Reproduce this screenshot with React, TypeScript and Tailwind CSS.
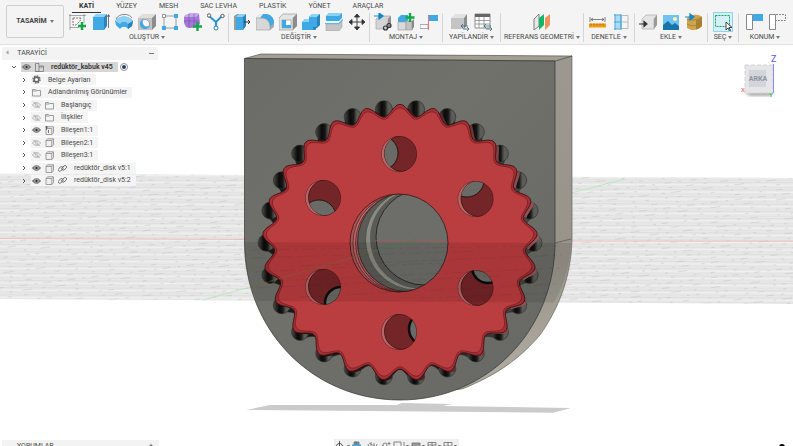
import type { ReactNode } from "react";

const GREEN = "#12a84a";
const BLUE = "#3fa9e6";

const ICONS: Record<string, ReactNode> = {
  sketch: (
    <>
      <path d="M1 1v16M15 1v9M0 2.500h17M1 14.500h9" stroke="#888" fill="none" strokeWidth=".7" />
      <path d="M4 5h8M4 5v7h3l4-4 1-3" stroke="#555" fill="none" strokeDasharray="2 1" strokeWidth=".8" />
      <path d="M13 9v8M9 13h8" stroke={GREEN} strokeWidth="2.400" />
    </>
  ),
  extrude: (
    <>
      <path d="M1 4l3-3h11l-3 3z" fill="#8fd0f5" />
      <path d="M1 4h11v13H1z" fill={BLUE} />
      <path d="M12 4l3-3v12l-3 4z" fill="#2a83bb" />
      <path d="M16.500 15V2M15 4l1.500-2.500L18 4" stroke="#555" fill="none" strokeWidth=".8" />
    </>
  ),
  revolve: (
    <>
      <path d="M1 6C4 0 14 0 17 5" stroke="#888" fill="none" />
      <path d="M0 8c4-6 14-6 18 0l-1 5-4 3c-2-3-6-3-8 0l-4-4z" fill={BLUE} />
      <path d="M0 8c4-6 14-6 18 0l-5 3c-2-3-6-3-8 0z" fill="#8fd0f5" />
      <path d="M13 11l5-3-1 5-4 3z" fill="#2a83bb" />
    </>
  ),
  hole: (
    <>
      <path d="M0 5l4-4h14l-4 4z" fill="#dedede" />
      <path d="M14 5l4-4v12l-4 4z" fill="#8c8c8c" />
      <path d="M0 5h14v12H0z" fill="#c2c2c2" />
      <circle cx="7" cy="11" r="4.500" fill="#f7f7f7" stroke="#888" strokeWidth=".7" />
      <path d="M4 8a4 4 0 0 0 6 6 5 5 0 0 1-6-6z" fill={BLUE} stroke={BLUE} strokeWidth="1.500" />
    </>
  ),
  pattern: (
    <>
      <path d="M3 3h12M3 3v12M15 5v8M5 15h8" stroke="#888" strokeWidth=".8" />
      <path d="M1.500 1.500h3v3h-3z" fill="#fff" stroke="#777" strokeWidth=".8" />
      <path d="M13 1h4v4h-4zM1 13h4v4H1zM13 13h4v4h-4z" fill={BLUE} />
    </>
  ),
  form: (
    <>
      <path d="M0 4c3-4 10-5 15-3l1 10c-4 4-10 5-14 3-2-3-3-7-2-10z" fill="#a578d8" />
      <path d="M0 4c3-4 10-5 15-3l-3 3c-4 0-8 0-12 0z" fill="#c8a8ee" />
      <path d="M5 1v14M10 1v13M0 8h15" stroke="#7d53b3" strokeWidth=".7" />
      <path d="M13.500 9v9M9 13.500h9" stroke={GREEN} strokeWidth="2.400" />
    </>
  ),
  pipe: (
    <>
      <path d="M2 3l7 6 6-6M9 9v6" stroke={BLUE} strokeWidth="2.200" fill="none" />
      <path d="M2 3l7 6 6-6M9 9v6" stroke="#2a5d80" strokeWidth=".6" fill="none" />
      <circle cx="2" cy="2.500" r="1.700" fill="#fff" stroke="#555" />
      <circle cx="15.500" cy="3" r="1.700" fill="#fff" stroke="#555" />
      <circle cx="9" cy="15" r="2" fill="#fff" stroke="#2a83bb" />
    </>
  ),
  press: (
    <>
      <path d="M1 3l3-2h7l-3 2v14H1z" fill="#9b9b9b" />
      <path d="M3 4l3-3h7l-3 3v13H3z" fill={BLUE} />
      <path d="M3 4l3-3h7l-3 3z" fill="#8fd0f5" />
      <path d="M10 4l3-3v12l-3 4z" fill="#2a83bb" />
      <path d="M11 9h6M15 7l2 2-2 2" stroke="#333" fill="none" />
    </>
  ),
  fillet: (
    <>
      <path d="M0 5l4-4h5c6 0 9 4 9 9v4l-4 3H0z" fill="#a9a9a9" />
      <path d="M6 1h3c6 0 9 4 9 9l-4 4c0-5-3-9-8-9H3z" fill={BLUE} />
      <path d="M0 5l4-4h3L4 5z" fill="#ececec" />
      <path d="M0 5h5c6 0 9 4 9 9v3H0z" fill="#d7d7d7" stroke="#999" strokeWidth=".6" />
    </>
  ),
  shell: (
    <>
      <path d="M0 5l4-4h14l-4 4v12H0z" fill="#e4e4e4" stroke="#999" strokeWidth=".7" />
      <path d="M14 5l4-4v12l-4 4z" fill="#8c8c8c" />
      <path d="M3 7h9v8H3z" fill="#fff" stroke="#999" strokeWidth=".7" />
      <path d="M3 7h4v5h5v3H3z" fill={BLUE} />
    </>
  ),
  combine: (
    <>
      <path d="M0 9l3-3h4V4l3-3h8v11l-4 3v2H0z" fill={BLUE} />
      <path d="M7 4l3-3h8l-3 3zM0 9l3-3h4v3z" fill="#8fd0f5" />
      <path d="M15 4l3-3v11l-3 3z" fill="#2a83bb" />
      <path d="M11 14h4v1l-4 2z" fill="#2a83bb" />
    </>
  ),
  split: (
    <>
      <path d="M1 11h13l3-3v6l-3 4H1z" fill="#c4c4c4" stroke="#999" strokeWidth=".5" />
      <path d="M1 3l3-3h13v5l-3 3H1z" fill={BLUE} />
      <path d="M1 3l3-3h13l-3 3z" fill="#8fd0f5" />
      <path d="M0 10.500h14l4-4" stroke="#56b9ee" strokeWidth="1.200" fill="none" />
    </>
  ),
  move: (
    <path
      d="M9 2v14M2 9h14M6.500 4L9 1l2.500 3zM6.500 14L9 17l2.500-3zM4 6.500L1 9l3 2.500zM14 6.500L17 9l-3 2.500z"
      stroke="#333"
      fill="#333"
      strokeWidth=".9"
    />
  ),
  assemble: (
    <>
      <path d="M2 6l4-3h11l-3 3v10H2z" fill="#d4d4d4" stroke="#999" strokeWidth=".6" />
      <path d="M14 6l3-3v10l-3 3z" fill="#909090" />
      <path d="M0 3h7M5 0l4 3-4 3z" stroke="#1484cf" fill="#1484cf" strokeWidth="1.200" />
      <g fill="none" stroke="#333" strokeWidth="1.200">
        <circle cx="11.500" cy="15" r="2" />
        <circle cx="15" cy="12.500" r="2" />
      </g>
    </>
  ),
  component: (
    <>
      <path d="M1 5l3-3h7v7H1z" fill={BLUE} />
      <path d="M1 9h8v8H1z" fill="#dadada" stroke="#999" strokeWidth=".6" />
      <path d="M9 8h6v9H9z" fill="#c2c2c2" stroke="#999" strokeWidth=".6" />
      <path d="M15 8l2-2v8l-2 3z" fill="#888" />
      <path d="M13 0v9M8.500 4.500h9" stroke={GREEN} strokeWidth="2.400" />
    </>
  ),
  joint: (
    <>
      <path d="M9 2h9v6H9z" fill={BLUE} />
      <path d="M0 11.500h8v4H0z" fill="#f7f7f7" stroke="#999" strokeWidth=".8" />
      <path d="M8.500 2v15" stroke="#e37878" />
    </>
  ),
  configure: (
    <>
      <path d="M0 5l4-4h12l-3 4z" fill="#e2e2e2" />
      <path d="M0 5h13v11H0z" fill="#c4c4c4" />
      <path d="M13 5l3-4v11l-3 4z" fill="#8c8c8c" />
      <path d="M10 13h7M12 16h6M12 11l-2 2 2 2M16 14l2 2-2 2" stroke="#33647f" fill="none" strokeWidth=".8" />
    </>
  ),
  table: (
    <>
      <path d="M1 1h15v14H1z" fill="#fff" stroke="#777" strokeWidth=".8" />
      <path d="M1 1h15v3H1z" fill="#666" />
      <path d="M1 7.500h15M1 11h15M5 4v11M10 4v11" stroke="#888" strokeWidth=".8" />
      <path d="M10 13h7M12 16h6M12 11l-2 2 2 2M16 14l2 2-2 2" stroke="#33647f" fill="none" strokeWidth=".8" />
    </>
  ),
  planes: (
    <>
      <path d="M1 6l5-5v12l-5 4z" fill="#e8e8e8" stroke="#666" strokeWidth=".8" />
      <path d="M6 5l5-4v11l-5 5z" fill="#12b76b" />
      <path d="M12 5l5-4v11l-5 5z" fill="#f0935a" />
    </>
  ),
  measure: (
    <>
      <path d="M1 4v5M16 4v5M2 6.500h13M4 5L2 6.500 4 8M13 5l2 1.500L13 8" stroke="#666" fill="none" strokeWidth=".8" />
      <path d="M0 10.500h17v4H0z" fill="#f39c12" />
      <path d="M2 10.500v2M5 10.500v2M8 10.500v2M11 10.500v2M14 10.500v2" stroke="#8b5a0b" strokeWidth=".7" />
    </>
  ),
  section: (
    <>
      <path d="M3 2h6v14H3z" fill="#a9dcf7" />
      <path d="M2 2h7v14H2M2 9h7M9 1v16M3 1v16" stroke="#4fa6d6" fill="none" />
      <path d="M10 2.500h6v13h-6M10 9h6" stroke="#bbb" fill="none" />
    </>
  ),
  insert: (
    <>
      <path d="M3 6l4-4h11l-3 4v10H3z" fill="#e4e4e4" stroke="#aaa" strokeWidth=".7" />
      <path d="M15 6l3-4v10l-3 4z" fill="#999" />
      <path d="M0 11h7M5 8.500l3 2.500-3 2.500z" stroke="#333" fill="#333" strokeWidth="1.200" />
    </>
  ),
  image: (
    <>
      <path d="M1 2h16v15H1z" fill="#6fc3f0" />
      <circle cx="13" cy="6" r="2" fill="#fff3b0" />
      <path d="M1 12l5-4 4 4 3-2 4 3v4H1z" fill="#1974ab" />
    </>
  ),
  decal: (
    <>
      <path d="M2 6c2-4 11-6 15-2v9c-4 5-11 5-15 2z" fill="#cfa44c" />
      <path d="M17 4v9c-2 2-4 3-6 3.500V7c2 0 4-1 6-3z" fill="#a9802f" />
      <path d="M2 6c4 2 10 1 15-2M2 11c5 3 10 2 15-2" stroke="#9a7630" fill="none" strokeWidth=".7" />
      <path d="M0 4h7M5 1l4 3-4 3z" stroke="#1484cf" fill="#1484cf" strokeWidth="1.200" />
    </>
  ),
  select: (
    <>
      <path d="M1.500 2.500h14v11h-14z" fill="none" stroke={GREEN} strokeDasharray="2 1" />
      <path d="M12 9v8l2-2 1.500 3 1-.5-1.500-3h3z" fill="#fff" stroke="#333" strokeWidth=".9" />
    </>
  ),
  capture: (
    <>
      <path d="M1.500 1.500h6v15h-6z" fill="#fff" stroke="#888" />
      <path d="M8 1h10v7H8z" fill={BLUE} />
    </>
  ),
  revert: (
    <>
      <path d="M1.500 1.500h6v15h-6z" fill="#fff" stroke="#888" />
      <path d="M8 1.500h9.500v6H8" fill="none" stroke="#888" strokeDasharray="2 1" />
    </>
  ),
};

const TABS = ["KATİ", "YÜZEY", "MESH", "SAC LEVHA", "PLASTİK", "YÖNET", "ARAÇLAR"];

const GROUPS = [
  { label: "OLUŞTUR", width: "w-[163px]", icons: ["sketch", "extrude", "revolve", "hole", "pattern", "form", "pipe"] },
  { label: "DEĞİŞTİR", width: "w-[141px]", icons: ["press", "fillet", "shell", "combine", "split", "move"] },
  { label: "MONTAJ", width: "w-[73px]", icons: ["assemble", "component", "joint"] },
  { label: "YAPİLANDİR", width: "w-[58px]", icons: ["configure", "table"] },
  { label: "REFERANS GEOMETRİ", width: "w-[83px]", icons: ["planes"] },
  { label: "DENETLE", width: "w-[51px]", icons: ["measure", "section"] },
  { label: "EKLE", width: "w-[73px]", icons: ["insert", "image", "decal"] },
  { label: "SEÇ", width: "w-[31px]", icons: ["select"] },
  { label: "KONUM", width: "w-[52px]", icons: ["capture", "revert"] },
];

type TreeItem = { name: string; icon: string; eye?: "on" | "off"; link?: boolean };

const TREE: TreeItem[] = [
  { name: "Belge Ayarları", icon: "gear" },
  { name: "Adlandırılmış Görünümler", icon: "folder" },
  { name: "Başlangıç", icon: "folder", eye: "off" },
  { name: "İlişkiler", icon: "folder", eye: "off" },
  { name: "Bileşen1:1", icon: "ground", eye: "on" },
  { name: "Bileşen2:1", icon: "body", eye: "off" },
  { name: "Bileşen3:1", icon: "body", eye: "off" },
  { name: "redüktör_disk v5:1", icon: "body", eye: "on", link: true },
  { name: "redüktör_disk v5:2", icon: "body", eye: "on", link: true },
];

function Caret() {
  return (
    <svg viewBox="0 0 4 3" className="h-[3px] w-1 shrink-0">
      <path d="M0 0h4L2 3z" fill="#777" />
    </svg>
  );
}

function Chevron({ open = false }: { open?: boolean }) {
  return (
    <svg viewBox="0 0 6 6" className="size-[6px] shrink-0">
      <path d={open ? "M1 2l2 2 2-2" : "M2 1l2 2-2 2"} fill="none" stroke="#555" />
    </svg>
  );
}

function Eye({ off = false }: { off?: boolean }) {
  return (
    <svg viewBox="0 0 10 8" className="h-2 w-[9px] shrink-0">
      <path
        d="M.500 4C3 .500 7 .500 9.500 4 7 7.500 3 7.500.500 4z"
        fill={off ? "#fff" : "#888"}
        stroke={off ? "#999" : "#555"}
        strokeWidth=".8"
      />
      <circle cx="5" cy="4" r="1.800" fill={off ? "none" : "#333"} stroke={off ? "#999" : "#ddd"} strokeWidth=".6" />
      {off && <path d="M1.500.500l7 7" stroke="#888" strokeWidth=".8" />}
    </svg>
  );
}

function TreeIcon({ kind }: { kind: string }) {
  return (
    <svg viewBox="0 0 9 9" className="size-[9px] shrink-0" fill="none" stroke="#888" strokeWidth=".8">
      {kind === "gear" && (
        <>
          <circle cx="4.500" cy="4.500" r="2.400" stroke="#666" strokeWidth="1.600" />
          <circle cx="4.500" cy="4.500" r="3.600" stroke="#666" strokeWidth="1.200" strokeDasharray="1.600 1.200" />
        </>
      )}
      {kind === "folder" && <path d="M.500 8V1.500h3l1 1h4V8zM.500 3h4" />}
      {kind === "body" && <path d="M1 2.500L2.500.800h6V6.500L7 8.500H1zM1 2.500h5.800V8M7 2.500L8.500 1" fill="#f0f0f0" />}
      {kind === "ground" && (
        <>
          <path d="M1 2.500L2.500.800h6V6.500L7 8.500H1zM1 2.500h5.800V8" fill="#f0f0f0" />
          <path d="M0 1h3M1.500 0v4M3.500 4v3" stroke="#555" />
        </>
      )}
      {kind === "root" && <path d="M.500 8.500V.500h3.500v8zM4 4h4.500v4.500H.500M4 4l1-1h3.500v1" stroke="#777" />}
    </svg>
  );
}

function LinkIcon() {
  return (
    <svg viewBox="0 0 9 9" className="size-[9px] shrink-0" fill="none" stroke="#666" strokeWidth=".9">
      <rect x="0" y="3.200" width="5.500" height="3" rx="1.500" transform="rotate(-40 3 5)" />
      <rect x="3.500" y="2.500" width="5.500" height="3" rx="1.500" transform="rotate(-40 6 4)" />
    </svg>
  );
}

function Toolbar() {
  return (
    <header className="z-10 flex h-11 shrink-0 overflow-hidden bg-[#f4f4f4] shadow-[0_1px_1px_#e2e2e2]">
      <div className="w-[66px] shrink-0 pt-[5px] pl-[6px]">
        <button className="flex h-[33px] w-[58px] items-center justify-center gap-[3px] rounded-[2px] border border-[#cfcfcf] font-bold text-[#444]">
          TASARİM <Caret />
        </button>
      </div>
      <div className="flex min-w-0 flex-1 flex-col">
        <nav className="flex h-[13px] shrink-0 gap-[8px] pl-[6px]">
          {TABS.map((tab, i) => (
            <button
              key={tab}
              className={
                i === 0
                  ? "border-b border-[#333] px-[7px] leading-[11px] font-bold whitespace-nowrap text-[#333]"
                  : "border-b border-transparent px-[7px] leading-[11px] whitespace-nowrap"
              }
            >
              {tab}
            </button>
          ))}
        </nav>
        <div className="flex h-[29px]">
          {GROUPS.map((group) => (
            <div
              key={group.label}
              className={`flex shrink-0 flex-col items-center border-r border-[#d5d5d5] last:border-r-0 ${group.width}`}
            >
              <div className="flex gap-[5px]">
                {group.icons.map((icon) => (
                  <button
                    key={icon}
                    aria-label={icon}
                    className={icon === "select" ? "bg-[#d6f0fa] outline outline-[#8fd3ec]" : ""}
                  >
                    <svg viewBox="0 0 18 18" className="size-[18px]">
                      {ICONS[icon]}
                    </svg>
                  </button>
                ))}
              </div>
              <button className="mt-[1px] flex items-center gap-[2px] leading-[10px] whitespace-nowrap">
                {group.label} <Caret />
              </button>
            </div>
          ))}
        </div>
      </div>
    </header>
  );
}

function Browser() {
  return (
    <aside className="w-[158px] pt-[3px] pl-[2px]">
      <div className="flex h-[13px] items-center bg-[#f3f3f3] px-1">
        <button aria-label="Collapse" className="text-[#777]">«</button>
        <span className="flex-1 pl-[8px]">TARAYİCİ</span>
        <button aria-label="Minimize" className="h-px w-[5px] bg-[#777]" />
      </div>
      <ul className="mt-[1px] grid h-[126px] grid-rows-10 whitespace-nowrap">
        <li className="flex items-center pl-[9px]">
          <Chevron open />
          <span className="ml-[4px] flex h-[10px] items-center gap-[4px] bg-[#d6d6d6] pr-[5px] pl-[1px] font-semibold text-[#333]">
            <Eye />
            <TreeIcon kind="root" />
            <span className="pl-[3px]">redüktör_kabuk v45</span>
          </span>
          <label className="ml-[2px] flex size-2 items-center justify-center rounded-full border border-[#8a93a0] bg-white">
            <input type="radio" aria-label="Activate" defaultChecked className="size-1 appearance-none rounded-full bg-[#30405a]" />
          </label>
        </li>
        {TREE.map((item) => (
          <li key={item.name} className="flex items-center pl-[19px]">
            <Chevron />
            <span className="ml-[4px] flex h-[11px] items-center gap-[4px] bg-[#f4f4f4] pr-[5px] pl-[1px]">
              {item.eye && <Eye off={item.eye === "off"} />}
              <TreeIcon kind={item.icon} />
              {item.link && <LinkIcon />}
              <span className="pl-[3px]">{item.name}</span>
            </span>
          </li>
        ))}
      </ul>
    </aside>
  );
}

// closed outline with `lobes` waves around the gear centre
function wave(lobes: number, rx: number, ry: number, amp: number) {
  const steps = 600;
  let d = "";
  for (let i = 0; i < steps; i++) {
    const t = (i / steps) * Math.PI * 2;
    const w = Math.cos(lobes * t) * amp;
    const x = 400 + (rx + w) * Math.sin(t);
    const y = 242.5 - (ry + w) * Math.cos(t);
    d += `${i ? "L" : "M"}${x.toFixed(2)} ${y.toFixed(2)}`;
  }
  return d + "Z";
}

const PINS = Array.from({ length: 26 }, (_, i) => {
  const t = ((i + 0.5) / 26) * Math.PI * 2;
  return { x: 400 + 133.5 * Math.sin(t), y: 242.8 - 134.5 * Math.cos(t) };
});

const HOLES = [
  { x: 399, y: 154, px: 381, py: 153, deep: false },
  { x: 323, y: 198, px: 319, py: 217, deep: false },
  { x: 475.5, y: 199, px: 467, py: 180, deep: false },
  { x: 323, y: 287, px: 341, py: 303, deep: true },
  { x: 475.5, y: 288, px: 488, py: 267, deep: true },
  { x: 399, y: 332, px: 425, py: 329, deep: true },
];

const FRONT = "M244.500 58.500L555 61V242C555 330 488 400 400 400C312 400 244.500 330 244.500 242Z";
const GEAR = wave(25, 131.5, 132.3, 5.8);
const CAVITY = wave(26, 133, 134, -7);

function GroundGrid() {
  return (
    <g clipPath="url(#ground)">
      <rect x="-600" y="165" width="2000" height="145" fill="#e8e8e8" />
      {Array.from({ length: 58 }, (_, i) => (
        <path
          key={i}
          d={`M-600 ${170 + i * 2.4}L1400 ${178 + i * 2.4}`}
          stroke={i % 3 === 0 ? "#dcdcdc" : i % 3 === 1 ? "#f3f3f3" : "#e1e1e1"}
          strokeWidth=".8"
        />
      ))}
      {Array.from({ length: 76 }, (_, i) => (
        <path
          key={i}
          d={`M-600 ${210 + i * 5}L1400 ${-30 + i * 5}`}
          stroke="#a8a8a8"
          strokeWidth=".6"
          strokeDasharray={`${4 + (i % 4) * 2} ${7 + (i % 5) * 3} 3 ${6 + (i % 3) * 4}`}
          opacity=".45"
        />
      ))}
    </g>
  );
}

function Model() {
  return (
    <svg viewBox="0 44 793 402" preserveAspectRatio="xMidYMin meet" className="absolute inset-0 h-full w-full">
      <defs>
        <clipPath id="ground">
          <path d="M-600 171L0 173.500L793 178L1400 181V307L793 304L0 299L-600 296Z" />
        </clipPath>
        <clipPath id="bore">
          <circle cx="399" cy="243" r="49" />
        </clipPath>
        <clipPath id="pins">
          {PINS.map((p, i) => (
            <circle key={i} cx={p.x} cy={p.y} r="8.500" />
          ))}
        </clipPath>
        {HOLES.map((h, i) => (
          <clipPath key={i} id={`hole${i}`}>
            <circle cx={h.x} cy={h.y} r="18" />
          </clipPath>
        ))}
        <linearGradient id="pin" x1="0" x2="1">
          <stop offset="0" stopColor="#4a4b47" />
          <stop offset=".35" stopColor="#0a0a0a" />
          <stop offset=".55" stopColor="#161615" />
          <stop offset=".75" stopColor="#5b5c57" />
        </linearGradient>
        <linearGradient id="cavity" x1="0" x2="1">
          <stop offset="0" stopColor="#1c1c1b" />
          <stop offset=".5" stopColor="#0f0f0f" />
          <stop offset="1" stopColor="#4c4d49" />
        </linearGradient>
        <linearGradient id="edge" x1="0" x2="1">
          <stop offset="0" stopColor="#0c0c0c" />
          <stop offset=".5" stopColor="#3c1719" />
          <stop offset="1" stopColor="#9b5658" />
        </linearGradient>
        <linearGradient id="front" x1="0" x2="1" y2="1">
          <stop offset="0" stopColor="#6b6c67" />
          <stop offset=".4" stopColor="#70716b" />
          <stop offset="1" stopColor="#676863" />
        </linearGradient>
        <linearGradient id="side" x2="0" y2="1">
          <stop offset="0" stopColor="#9c988f" />
          <stop offset=".6" stopColor="#98948a" />
          <stop offset="1" stopColor="#b3afa4" />
        </linearGradient>
      </defs>

      <GroundGrid />
      <path d="M-600 236L245 239.500M571 241L1400 242" stroke="#f5b0b0" strokeWidth=".7" />
      <path d="M203 300L250 287M571 193L625 179" stroke="#a5e8ae" strokeWidth=".7" />

      <path d="M246 410L270 405H397L402 403L452 404L443 406L571 408L553 412.700Z" fill="#cbcbcb" />

      <path
        d="M555 61L572 56V240C571 275 560 307 540 335C522 356 500 374 462 389L400 396Z"
        fill="url(#side)"
        stroke="#55554f"
        strokeWidth=".6"
      />
      <path d="M244.500 58.500L261 54L572 56L555 61Z" fill="#a39f94" stroke="#44443f" strokeWidth=".6" />
      <path d={FRONT} fill="url(#front)" stroke="#333430" strokeWidth=".7" />
      <path d="M555 243L571 239" stroke="#55554f" strokeWidth=".7" />

      <path d={CAVITY} fill="url(#cavity)" stroke="#2b2c29" strokeWidth=".6" />
      {PINS.map((p, i) => (
        <circle key={i} cx={p.x} cy={p.y} r="8.500" fill="url(#pin)" stroke="#2b2c29" strokeWidth=".6" />
      ))}
      <g clipPath="url(#pins)">
        <path d={GEAR} transform="translate(3 1)" fill="url(#edge)" />
      </g>
      <path d={GEAR} fill="#a72f34" stroke="#3a1113" strokeWidth=".9" />
      <path d={wave(25, 128.7, 129.5, 5.2)} fill="#ba3d3f" stroke="#6b1d20" strokeWidth=".7" />

      {HOLES.map((h, i) => (
        <g key={i} clipPath={`url(#hole${i})`}>
          <circle cx={h.x} cy={h.y} r="18" fill="#b96566" />
          <circle cx={h.x + 3.5} cy={h.y - 0.5} r="18" fill="#742528" stroke="#3a1113" strokeWidth=".8" />
          <clipPath id={`inner${i}`}>
            <circle cx={h.x + 3.5} cy={h.y - 0.5} r="18" />
          </clipPath>
          <g clipPath={`url(#inner${i})`}>
            <circle
              cx={h.px}
              cy={h.py}
              r={h.deep ? 16 : 17}
              fill="#6a6b66"
              stroke="#0d0d0d"
              strokeWidth={h.deep ? 2.5 : 0.8}
            />
          </g>
          <circle cx={h.x} cy={h.y} r="17.800" fill="none" stroke="#4a1618" strokeWidth=".7" />
        </g>
      ))}

      <g clipPath="url(#bore)">
        <circle cx="399" cy="243" r="49" fill="#a95657" />
        <circle cx="402" cy="243" r="49" fill="#bd7070" stroke="#4a1618" strokeWidth=".7" />
        <circle cx="404.500" cy="243" r="49" fill="#b35a5b" stroke="#4a1618" strokeWidth=".7" />
        <circle cx="407" cy="242" r="49.500" fill="#5b5c57" stroke="#242422" strokeWidth=".8" />
        <circle cx="416" cy="239.500" r="50.500" fill="#8b8b82" stroke="#3b3c38" strokeWidth=".6" />
        <circle cx="420" cy="238.500" r="50" fill="#5a5b56" />
        <circle cx="424" cy="237" r="48" fill="#6d6e69" stroke="#1c1c1a" strokeWidth=".8" />
      </g>
      <circle cx="399" cy="243" r="49" fill="none" stroke="#3a1113" strokeWidth=".8" />

      {/* work plane seen through the bodies */}
      <path
        d="M244.500 242L571 243C570 264 565 283 554 302.500L257 301C248 280 244.500 262 244.500 242Z"
        fill="#000"
        opacity=".09"
      />
      <path
        d="M250 250L560 246M252 258L480 251M300 266L562 255M254 272L440 263M270 281L560 268M256 288L500 276M300 297L556 284M420 298L552 293"
        stroke="#000"
        strokeWidth=".5"
        strokeDasharray="14 5 4 3"
        opacity=".12"
      />
      <path d="M375 240.500H447" stroke="#b05252" strokeWidth=".6" />
      <path d="M250 287L375 251" stroke="#6f6a2b" strokeWidth=".6" strokeDasharray="4 1" />
      <path d="M375 251L418 239" stroke="#2d8b3c" strokeWidth=".7" strokeDasharray="3 1" />
    </svg>
  );
}

function ViewCube() {
  return (
    <svg viewBox="0 0 44 46" className="mt-[10px] mr-[9px] h-[46px] w-11 shrink-0">
      <defs>
        <filter id="soft">
          <feGaussianBlur stdDeviation="1.500" />
        </filter>
      </defs>
      <path d="M4 38h30l-4 4H10z" fill="#aaa" filter="url(#soft)" />
      <path d="M5 11h28v28H5z" fill="#e6e6e8" stroke="#d3d3d3" strokeDasharray="4 2" />
      <path d="M9 16h17v17H9z" fill="#d2d5da" />
      <text x="18" y="27" textAnchor="middle" fontSize="7" fontWeight="700" fill="#8e959e">
        ARKA
      </text>
      <path d="M33.500 10v29" stroke="#8b8bf0" />
      <text x="31" y="8" fontSize="9" fill="#5959e0">Z</text>
      <text x="1" y="38" fontSize="6" fontWeight="700" fill="#f08080">X</text>
      <text x="29" y="43" fontSize="6" fontWeight="700" fill="#34c759">Y</text>
    </svg>
  );
}

function NavBar() {
  return (
    <div className="flex h-3 w-[125px] items-start bg-[#f0f0f0] pt-[2px]">
      <svg viewBox="0 0 125 10" className="h-[10px] w-full" fill="none" stroke="#777" strokeWidth=".9">
        <path d="M3 7a3 3 0 1 1 5 0M5.500 0v6" stroke="#444" />
        <path d="M20 1h5v3h-5zM22 0v3" fill="#888" />
        <path d="M18 4.500h9" stroke={BLUE} strokeWidth="2" />
        <path d="M35 6l-1-3M37 5V1M40 5V2M42 6l1-3M35 2l7 4" strokeWidth=".8" />
        <path d="M47 7l2-3M55 1v3M53.500 2.500h3" />
        <circle cx="51" cy="4" r="2" />
        <path d="M60 7V1h7v6M70 1v6" />
        <path d="M78 7V2h8v5" fill="#999" />
        <path d="M94 7V1.500h8V7M94 4h8M98 1v6" />
        <path d="M110 7V1.500h8V7M110 5h8M114 1v6" />
        <path d="M13 4h3l-1.500 2zM72 4h3l-1.500 2zM88 4h3l-1.500 2zM104 4h3l-1.500 2zM120 4h3l-1.500 2z" fill="#666" stroke="none" />
      </svg>
    </div>
  );
}

export default function App() {
  return (
    <div className="flex h-screen flex-col overflow-hidden bg-white [font-family:Roboto,sans-serif] text-[7px] text-[#484848]">
      <Toolbar />
      <main className="relative flex-1 overflow-hidden">
        <Model />
        <div className="relative flex h-full flex-col justify-between">
          <div className="flex items-start justify-between">
            <Browser />
            <ViewCube />
          </div>
          <footer className="grid h-[7px] grid-cols-[1fr_auto_1fr] items-start">
            <div className="mt-[1px] ml-[2px] flex h-3 w-[157px] items-center justify-between bg-[#f3f3f3] pr-[6px] pl-[15px]">
              <span>YORUMLAR</span>
              <button aria-label="Add comment">+</button>
            </div>
            <NavBar />
            <button aria-label="Help" className="mt-[5px] mr-2 size-[6px] justify-self-end rounded-full bg-black" />
          </footer>
        </div>
      </main>
    </div>
  );
}
